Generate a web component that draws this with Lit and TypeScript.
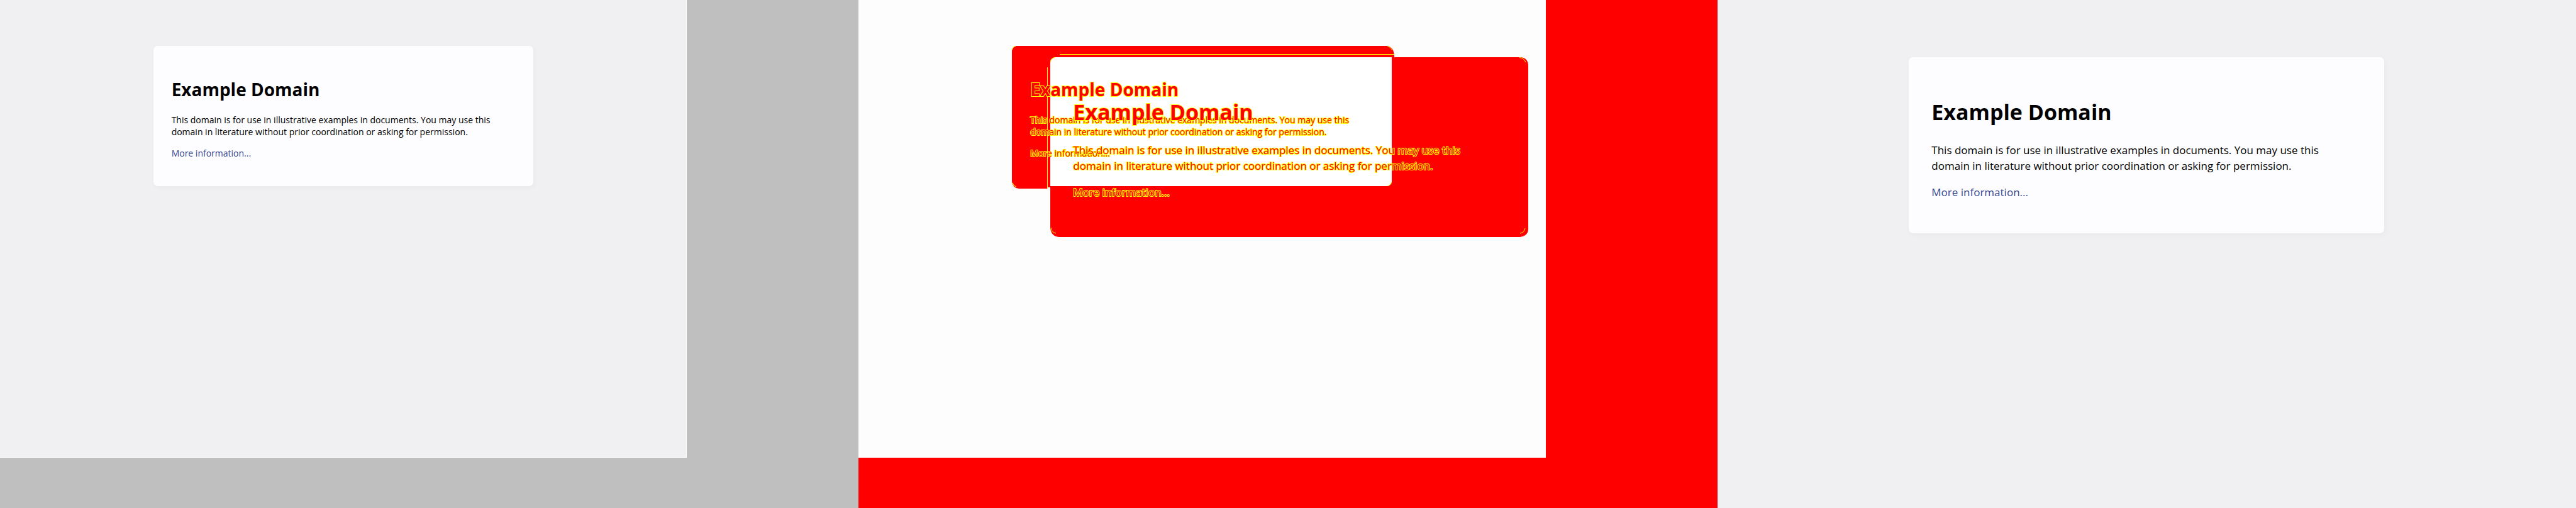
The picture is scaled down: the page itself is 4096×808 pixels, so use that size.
import { LitElement, html, css } from "lit";
import { customElement, property } from "lit/decorators.js";

@customElement("domain-text")
class DomainText extends LitElement {
  @property({ type: Boolean, reflect: true }) large = false;
  @property({ type: Boolean, reflect: true }) outlined = false;

  static styles = css`
    :host {
      display: block;
      color: #000;
      font-family: "Segoe UI", "Open Sans", "Noto Sans", sans-serif;
      font-size: 14px;
      line-height: 19px;
      white-space: nowrap;
    }
    h1 { margin: 0 0 21px; font-size: 28px; line-height: 36px; font-weight: 700; }
    p { margin: 0 0 15px; }
    p:last-child { margin: 0; }
    a { color: #38488f; text-decoration: none; }
    :host([large]) { font-size: 17px; line-height: 25px; }
    :host([large]) h1 { margin-bottom: 25px; font-size: 34px; line-height: 46px; }
    :host([large]) p { margin-bottom: 17px; }
    :host([large]) p:last-child { margin: 0; }
    :host([outlined]),
    :host([outlined]) a {
      color: #f00;
      -webkit-text-stroke: 2px #ff0;
      paint-order: stroke fill;
    }
  `;

  render() {
    return html`<h1>Example Domain</h1>
      <p>This domain is for use in illustrative examples in documents. You may use this<br>domain in literature without prior coordination or asking for permission.</p>
      <p><a href="#more">More information...</a></p>`;
  }
}

@customElement("app-root")
class AppRoot extends LitElement {
  static styles = css`
    :host { display: block; }
    * { box-sizing: border-box; }
    .panels { display: grid; grid-template-columns: repeat(3, minmax(0, 1fr)); min-height: 100vh; }
    .panel {
      display: grid;
      grid-template-rows: 91fr 10fr;
      grid-template-columns: 4fr 1fr;
      background: #bfbfbf;
    }
    .panel.diff { background: #f00; }
    .panel.wide { display: flow-root; background: #f0f0f2; }
    .page { display: flow-root; background: #f0f0f2; border: 0 solid #fff; border-width: 0 1px 1px 0; }
    .diff .page { display: grid; align-items: start; justify-items: start; background: #fdfdfd; border: 0; }
    .diff .page > * { grid-area: 1 / 1; }
    .shapes { display: block; }
    .small-text { margin: 124px 0 0 273px; }
    .large-text { margin: 155px 0 0 341px; }
    .card {
      width: 604px;
      margin: 73px auto 0;
      padding: 51px 29px 43px;
      background: #fdfdff;
      border-radius: 7px;
      box-shadow: 2px 3px 7px 2px rgba(0, 0, 0, 0.02);
    }
    .card.large { width: 756px; margin-top: 91px; padding: 64px 36px 53px; border-radius: 7px; }
  `;

  render() {
    return html`<main class="panels">
      <section class="panel">
        <div class="page">
          <article class="card"><domain-text></domain-text></article>
        </div>
      </section>
      <section class="panel diff">
        <div class="page">
          <svg class="shapes" width="1092" height="400" viewBox="0 0 1092 400" aria-hidden="true">
            <path fill="#f00" d="M251 73H841Q852 75 852 91H1053Q1065 92 1065 105V364Q1065 375 1052 377H319Q306 376 305 362V298H301V300H255Q245 299 244 289V81Q245 74 251 73Z"/>
            <path fill="#fff" d="M313 91H848V289Q847 295 841 296H305V99Q306 92 313 91Z"/>
            <g fill="none" stroke="#ff0">
              <path d="M320 86.5H852M300.5 107V300"/>
              <path d="M244.500 79Q245 74 250 73.500M841 73.500Q846 74 849 80M245 291Q246 296 251 297"/>
              <path d="M305.500 98Q306 92 313 91.500M842 295.500Q847 294 847.500 289"/>
              <path d="M1051 91.500Q1058 92 1061 99M306 362Q307 370 314 371M1052 371Q1059 370 1060 363"/>
            </g>
          </svg>
          <domain-text class="small-text" outlined></domain-text>
          <domain-text class="large-text" large outlined></domain-text>
        </div>
      </section>
      <section class="panel wide">
        <article class="card large"><domain-text large></domain-text></article>
      </section>
    </main>`;
  }
}
